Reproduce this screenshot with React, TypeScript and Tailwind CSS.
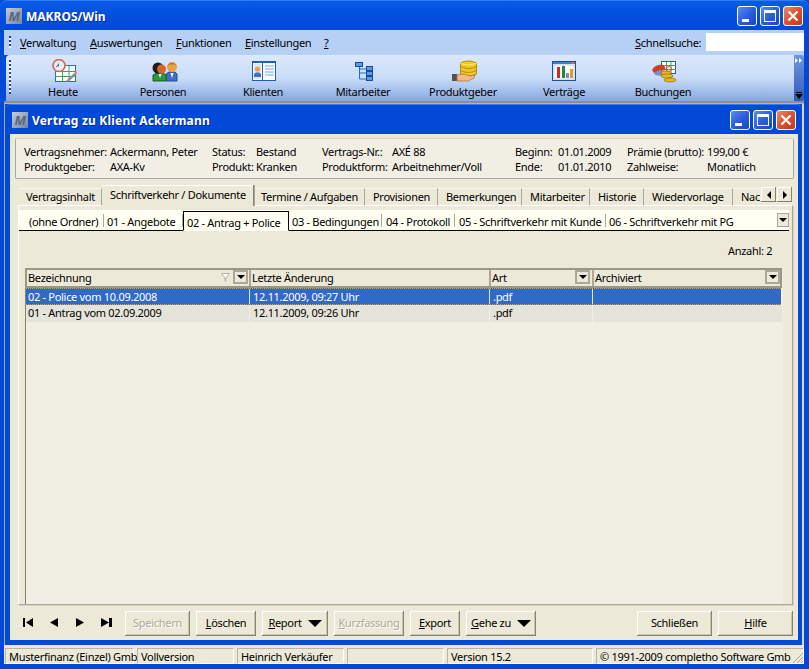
import type { ReactNode } from "react";

const FONT = "[font-family:'Liberation_Sans',Arial,sans-serif]";

function T({ className, children }: { className: string; children: ReactNode }) {
  return <div className={`absolute whitespace-nowrap leading-[13px] ${className}`}>{children}</div>;
}

function WinButtons({ className }: { className: string }) {
  const base =
    "w-[20px] h-[20px] rounded-[3px] border border-white relative flex items-center justify-center";
  return (
    <div className={`absolute flex gap-[3px] ${className}`}>
      <div className={`${base} bg-gradient-to-br from-[#5b8cf0] via-[#2a5fe0] to-[#1a45c0]`}>
        <div className="absolute left-[4px] bottom-[3px] w-[7px] h-[3px] bg-white" />
      </div>
      <div className={`${base} bg-gradient-to-br from-[#5b8cf0] via-[#2a5fe0] to-[#1a45c0]`}>
        <div className="w-[12px] h-[12px] border border-white border-t-[3px]" />
      </div>
      <div className={`${base} bg-gradient-to-br from-[#e8876a] via-[#d9532e] to-[#c03a18]`}>
        <svg width="12" height="12" viewBox="0 0 12 12">
          <path d="M1.5 1.5 L10.5 10.5 M10.5 1.5 L1.5 10.5" stroke="#fff" strokeWidth="2.2" />
        </svg>
      </div>
    </div>
  );
}

function AppIcon({ className }: { className: string }) {
  return (
    <div
      className={`absolute w-[16px] h-[16px] bg-gradient-to-br from-[#c3cddd] to-[#76859f] flex items-center justify-center ${className}`}
    >
      <span className="text-[13px] font-bold italic text-[#5a6680] leading-none">M</span>
    </div>
  );
}

function IconHeute() {
  return (
    <svg className="absolute left-[51px] top-[59px]" width="26" height="24" viewBox="0 0 26 24">
      <rect x="4.5" y="6.5" width="20" height="16" fill="#fff" stroke="#1d6fd0" />
      <path d="M4 12.5H24M4 17.5H24M11.5 7V22M18 7V22" stroke="#3aa850" strokeWidth="1" />
      <circle cx="8" cy="6.5" r="6" fill="#e8eef5" stroke="#e0604c" strokeWidth="1.6" />
      <path d="M8 7 L4.5 8.5 L8 4 Z" fill="#5a6a80" />
      <path d="M15 22 L23 14 L25 16 L17 23 Z" fill="#8a8f9c" />
      <path d="M23 14 L25 12 L26 14 L25 16 Z" fill="#d08a50" />
    </svg>
  );
}

function IconPersonen() {
  return (
    <svg className="absolute left-[152px] top-[61px]" width="26" height="21" viewBox="0 0 26 21">
      <path d="M14 20V13L17 11H23L25 13V20Z" fill="#3f6fc8" stroke="#274a8c" />
      <path d="M18.5 12L20 17L21.5 12Z" fill="#fff" />
      <circle cx="20" cy="6" r="5" fill="#f0a040" />
      <path d="M15 5 Q20 -2 25 5 L22 3.5 H18Z" fill="#b87820" />
      <path d="M1 20V14L5 12H11L14 14V20Z" fill="#2a9a3a" stroke="#146020" />
      <path d="M6.5 13L8 17L9.5 13Z" fill="#fff" />
      <circle cx="6" cy="7" r="5.5" fill="#1c1c1c" />
      <circle cx="9.5" cy="8" r="4.5" fill="#d8662c" />
    </svg>
  );
}

function IconKlienten() {
  return (
    <svg className="absolute left-[252px] top-[61px]" width="24" height="20" viewBox="0 0 24 20">
      <rect x="0.5" y="0.5" width="23" height="19" fill="#fff" stroke="#1c5fc0" />
      <rect x="0" y="0" width="24" height="2" fill="#1c5fc0" />
      <rect x="10" y="1" width="1" height="18" fill="#1c5fc0" />
      <rect x="2" y="3" width="7" height="15" fill="#dbe8fa" />
      <circle cx="5.5" cy="8" r="2.6" fill="#f0a040" />
      <path d="M2 16V13L4 11.5H7L9 13V16Z" fill="#3f6fc8" />
      <path d="M13 5H22M13 8H22M13 11H22M13 14H22" stroke="#6fa8e6" />
    </svg>
  );
}

function IconMitarbeiter() {
  return (
    <svg className="absolute left-[355px] top-[62px]" width="18" height="19" viewBox="0 0 18 19">
      <path d="M4.5 5V17H11M4.5 11H11M4.5 7H11" stroke="#1c6fd0" fill="none" />
      <rect x="0.5" y="0.5" width="7" height="4" fill="#5f9ae6" stroke="#174a9c" />
      <rect x="11.5" y="4.5" width="6" height="4" fill="#5f9ae6" stroke="#174a9c" />
      <rect x="11.5" y="9.5" width="6" height="4" fill="#5f9ae6" stroke="#174a9c" />
      <rect x="11.5" y="14.5" width="6" height="4" fill="#5f9ae6" stroke="#174a9c" />
    </svg>
  );
}

function IconProduktgeber() {
  return (
    <svg className="absolute left-[452px] top-[60px]" width="25" height="22" viewBox="0 0 25 22">
      <path d="M8.5 3 Q16.5 -1 24.5 3 V14 Q16.5 18 8.5 14 Z" fill="#f2c81e" stroke="#b88a10" />
      <path d="M8.5 6.5 Q16.5 10.5 24.5 6.5 M8.5 10.5 Q16.5 14.5 24.5 10.5" stroke="#b88a10" fill="none" />
      <path d="M8.5 3 Q16.5 7 24.5 3" stroke="#fff080" fill="none" />
      <rect x="0" y="14" width="5" height="7" fill="#55524c" />
      <path d="M5 15 L12 14 L18 16 L23 15 L22 18 L16 21 H5 Z" fill="#f2b98a" stroke="#b0683a" strokeWidth="0.7" />
    </svg>
  );
}

function IconVertraege() {
  return (
    <svg className="absolute left-[552px] top-[61px]" width="24" height="20" viewBox="0 0 24 20">
      <rect x="0.5" y="0.5" width="23" height="19" fill="#eef1f6" stroke="#1c4f9c" />
      <rect x="1" y="1" width="22" height="2" fill="#3f7fd8" />
      <rect x="19" y="1" width="3" height="2" fill="#d86a40" />
      <rect x="2" y="4" width="20" height="14" fill="#fff" stroke="#a0a8b4" strokeWidth="0.5" />
      <rect x="5" y="6" width="3" height="11" fill="#d02828" />
      <rect x="10" y="5" width="3" height="12" fill="#1e8a3a" />
      <rect x="14" y="12" width="3" height="5" fill="#7f8fb0" />
      <rect x="18" y="8" width="3" height="9" fill="#e8962c" />
    </svg>
  );
}

function IconBuchungen() {
  return (
    <svg className="absolute left-[652px] top-[61px]" width="26" height="22" viewBox="0 0 26 22">
      <rect x="9.5" y="0.5" width="14" height="12" fill="#fff" stroke="#1c5fc0" />
      <path d="M9 4.5H24M9 8.5H24M14.5 1V12M19 1V12" stroke="#3aa850" />
      <path d="M0 9 Q3 3 12 4 L14 9 L8 10 L2 12 Z" fill="#d83a28" />
      <path d="M2 12 L8 9 L12 11 L9 15 L3 14 Z" fill="#7f8fc8" />
      <circle cx="17" cy="8" r="2.5" fill="none" stroke="#e0503c" />
      <ellipse cx="14" cy="12" rx="5" ry="2" fill="#e8b820" stroke="#8a6a10" strokeWidth="0.7" />
      <ellipse cx="15" cy="15" rx="6" ry="2" fill="#e8b820" stroke="#8a6a10" strokeWidth="0.7" />
      <ellipse cx="18" cy="19" rx="6" ry="2" fill="#e8b820" stroke="#8a6a10" strokeWidth="0.7" />
    </svg>
  );
}

const TOP_TABS = [
  { label: "Vertragsinhalt", cls: "w-[84px]" },
  { label: "Schriftverkehr / Dokumente", cls: "w-[151px]", active: true },
  { label: "Termine / Aufgaben", cls: "w-[112px]" },
  { label: "Provisionen", cls: "w-[73px]" },
  { label: "Bemerkungen", cls: "w-[84px]" },
  { label: "Mitarbeiter", cls: "w-[68px]" },
  { label: "Historie", cls: "w-[54px]" },
  { label: "Wiedervorlage", cls: "w-[89px]" },
  { label: "Nac", cls: "w-[40px]" },
];

const SUB_TABS = [
  { label: "(ohne Ordner)", cls: "w-[85px] pl-[10px]" },
  { label: "01 - Angebote", cls: "w-[79px] pl-[3px]" },
  { label: "02 - Antrag + Police", cls: "w-[106px] pl-[3px]", active: true },
  { label: "03 - Bedingungen", cls: "w-[93px] pl-[3px]" },
  { label: "04 - Protokoll", cls: "w-[73px] pl-[4px]" },
  { label: "05 - Schriftverkehr mit Kunde", cls: "w-[151px] pl-[4px]" },
  { label: "06 - Schriftverkehr mit PG", cls: "w-[140px] pl-[3px]", last: true },
];

const RAISED = "shadow-[inset_-1px_-1px_0_#85836f,inset_1px_1px_0_#fff,inset_-2px_-2px_0_#c9c6b4]";
const HEADER_BTN =
  "absolute w-[15px] h-[14px] border-2 border-[#aca899] bg-[#ece9d8] flex items-center justify-center";

function Caret() {
  return <div className="w-0 h-0 border-x-[4px] border-x-transparent border-t-[4px] border-t-black" />;
}

function Btn({ className, disabled, children }: { className: string; disabled?: boolean; children: ReactNode }) {
  return (
    <div
      className={`absolute top-[611px] h-[25px] bg-[#ece9d8] flex items-center justify-center gap-[6px] ${RAISED} ${
        disabled ? "text-[#aca899] [text-shadow:1px_1px_0_#fff]" : "text-black"
      } ${className}`}
    >
      {children}
    </div>
  );
}

function DropCaret() {
  return <div className="w-0 h-0 border-x-[7px] border-x-transparent border-t-[7px] border-t-black" />;
}

export default function App() {
  return (
    <div className={`relative w-[809px] h-[669px] overflow-hidden bg-[#0349d8] text-[11px] tracking-[-0.3px] text-black ${FONT}`}>
      {/* outer frame */}
      <div className="absolute inset-x-0 top-0 h-[30px] rounded-t-[7px] bg-gradient-to-b from-[#0a5be8] via-[#0250dc] to-[#0349d8] border-t border-[#2f7cf5]" />
      <AppIcon className="left-[6px] top-[8px]" />
      <T className="left-[26px] top-[10px] text-[12px] tracking-normal font-bold text-white [text-shadow:1px_1px_0_#0a2a90]">MAKROS/Win</T>
      <WinButtons className="left-[737px] top-[6px]" />

      {/* menu */}
      <div className="absolute left-[4px] right-[5px] top-[30px] h-[25px] bg-[#b6cff5]" />
      <div className="absolute left-[9px] top-[36px] w-[2px] h-[12px] bg-[repeating-linear-gradient(to_bottom,#27408b_0,#27408b_2px,#ffffff_2px,#ffffff_4px)]" />
      <T className="left-[20px] top-[36px]"><u>V</u>erwaltung</T>
      <T className="left-[90px] top-[36px]"><u>A</u>uswertungen</T>
      <T className="left-[176px] top-[36px]"><u>F</u>unktionen</T>
      <T className="left-[245px] top-[36px]"><u>E</u>instellungen</T>
      <T className="left-[324px] top-[36px]"><u>?</u></T>
      <T className="left-[635px] top-[36px]"><u>S</u>chnellsuche:</T>
      <div className="absolute left-[706px] top-[33px] w-[98px] h-[18px] bg-white" />

      {/* toolbar */}
      <div className="absolute left-[6px] right-[5px] top-[55px] h-[46px] rounded-tl-[4px] bg-gradient-to-b from-[#dbe8fd] via-[#c9dcf8] to-[#86a8e0]" />
      <div className="absolute left-[9px] top-[60px] w-[2px] h-[34px] bg-[repeating-linear-gradient(to_bottom,#27408b_0,#27408b_2px,#ffffff_2px,#ffffff_4px)]" />
      <div className="absolute left-[794px] top-[55px] w-[10px] h-[46px] bg-gradient-to-b from-[#6f97e0] to-[#2f5bb5] rounded-r-[2px]" />
      <svg className="absolute left-[795px] top-[58px]" width="8" height="5" viewBox="0 0 8 5">
        <path d="M0 0L3 2.5L0 5ZM4 0L7 2.5L4 5Z" fill="#fff" />
      </svg>
      <div className="absolute left-[796px] top-[92px] w-[6px] h-px bg-black" />
      <div className="absolute left-[795px] top-[94px] w-0 h-0 border-x-[4px] border-x-transparent border-t-[5px] border-t-black" />
      <IconHeute />
      <IconPersonen />
      <IconKlienten />
      <IconMitarbeiter />
      <IconProduktgeber />
      <IconVertraege />
      <IconBuchungen />
      <T className="left-[13px] w-[100px] text-center top-[85px]">Heute</T>
      <T className="left-[113px] w-[100px] text-center top-[85px]">Personen</T>
      <T className="left-[213px] w-[100px] text-center top-[85px]">Klienten</T>
      <T className="left-[313px] w-[100px] text-center top-[85px]">Mitarbeiter</T>
      <T className="left-[413px] w-[100px] text-center top-[85px]">Produktgeber</T>
      <T className="left-[514px] w-[100px] text-center top-[85px]">Verträge</T>
      <T className="left-[613px] w-[100px] text-center top-[85px]">Buchungen</T>

      {/* separator between toolbar and child window */}
      <div className="absolute left-[4px] right-[5px] top-[101px] h-[3px] bg-[#8d8f8f] border-b border-[#c9b28a]" />
      <div className="absolute left-[4px] top-[104px] w-px h-[541px] bg-[#aca899]" />
      <div className="absolute left-[802px] top-[104px] w-[2px] h-[541px] bg-[#d8d6c8]" />

      {/* child window */}
      <div className="absolute left-[5px] top-[104px] w-[797px] h-[541px] rounded-t-[6px] bg-[#0349d8] border-t border-[#2f7cf5]" />
      <AppIcon className="left-[12px] top-[112px]" />
      <T className="left-[32px] top-[114px] text-[12px] tracking-[0.2px] font-bold text-white [text-shadow:1px_1px_0_#0a2a90]">Vertrag zu Klient Ackermann</T>
      <WinButtons className="left-[730px] top-[110px]" />

      <div className="absolute left-[10px] top-[134px] w-[788px] h-[506px] bg-[#ece9d8]" />

      {/* summary */}
      <div className="absolute left-[15px] top-[138px] w-[779px] h-[41px] bg-[#f1efe4] border border-[#aca899] rounded-[2px] border-t-[#d6d3c4]" />
      <T className="left-[24px] top-[145px]">Vertragsnehmer:</T>
      <T className="left-[110px] top-[145px]">Ackermann, Peter</T>
      <T className="left-[212px] top-[145px]">Status:</T>
      <T className="left-[256px] top-[145px]">Bestand</T>
      <T className="left-[322px] top-[145px]">Vertrags-Nr.:</T>
      <T className="left-[392px] top-[145px]">AXÉ 88</T>
      <T className="left-[515px] top-[145px]">Beginn:</T>
      <T className="left-[558px] top-[145px]">01.01.2009</T>
      <T className="left-[627px] top-[145px]">Prämie (brutto):</T>
      <T className="left-[707px] top-[145px]">199,00 €</T>
      <T className="left-[24px] top-[160px]">Produktgeber:</T>
      <T className="left-[110px] top-[160px]">AXA-Kv</T>
      <T className="left-[212px] top-[160px]">Produkt:</T>
      <T className="left-[256px] top-[160px]">Kranken</T>
      <T className="left-[322px] top-[160px]">Produktform:</T>
      <T className="left-[392px] top-[160px]">Arbeitnehmer/Voll</T>
      <T className="left-[515px] top-[160px]">Ende:</T>
      <T className="left-[558px] top-[160px]">01.01.2010</T>
      <T className="left-[627px] top-[160px]">Zahlweise:</T>
      <T className="left-[707px] top-[160px]">Monatlich</T>

      {/* main tab panel */}
      <div className="absolute left-[18px] top-[205px] w-[775px] h-[400px] border border-[#aca899] border-t-white border-l-white shadow-[1px_1px_0_#d6d3c4]" />
      <div className="absolute left-[18px] top-[185px] h-[21px] w-[742px] flex items-end overflow-hidden">
        {TOP_TABS.map((tab) => (
          <div
            key={tab.label}
            className={`${tab.cls} shrink-0 ${
              tab.active
                ? "h-[21px] pt-[2px] bg-[#ece9d8] border-t border-white z-10 shadow-[1px_0_0_#85836f,2px_0_0_#aca899]"
                : "h-[18px] pt-[1px] bg-[#ece9d8] border-t border-[#f8f7f0] border-r border-r-[#aca899] border-b border-b-white"
            } pl-[8px] overflow-hidden whitespace-nowrap leading-[13px]`}
          >
            {tab.label}
          </div>
        ))}
      </div>
      <div className="absolute left-[761px] top-[187px] w-[15px] h-[15px] bg-[#ece9d8] shadow-[inset_-1px_-1px_0_#85836f,inset_1px_1px_0_#fff] flex items-center justify-center">
        <div className="w-0 h-0 border-y-[4px] border-y-transparent border-r-[4px] border-r-black" />
      </div>
      <div className="absolute left-[777px] top-[187px] w-[15px] h-[15px] bg-[#ece9d8] shadow-[inset_-1px_-1px_0_#85836f,inset_1px_1px_0_#fff] flex items-center justify-center">
        <div className="w-0 h-0 border-y-[4px] border-y-transparent border-l-[4px] border-l-black" />
      </div>

      {/* folder tabs */}
      <div className="absolute left-[19px] top-[210px] w-[770px] h-[21px] bg-[#fffff2] border-b border-black" />
      <div className="absolute left-[19px] top-[211px] h-[20px] flex">
        {SUB_TABS.map((tab) => (
          <div
            key={tab.label}
            className={`${tab.cls} shrink-0 h-[20px] whitespace-nowrap leading-[21px] ${
              tab.active
                ? "border border-black border-b-[#fffff2] bg-[#fffff2] leading-[19px]"
                : tab.last
                  ? ""
                  : "relative after:absolute after:right-0 after:top-[3px] after:h-[13px] after:w-px after:bg-[#aca899]"
            }`}
          >
            {tab.label}
          </div>
        ))}
      </div>
      <div className="absolute left-[777px] top-[213px] w-[12px] h-[14px] bg-[#ece9d8] border border-[#aca899] flex items-center justify-center">
        <Caret />
      </div>

      <T className="left-[728px] top-[244px]">Anzahl: 2</T>

      {/* grid */}
      <div className="absolute left-[25px] top-[268px] w-[758px] h-[336px] bg-[#f1efe4] border-l border-[#85836f]" />
      <div className="absolute left-[25px] top-[268px] w-[757px] h-[20px] bg-[#ece9d8] border-2 border-[#9a9785] flex">
        <div className="w-[224px] h-full relative border-r-2 border-[#aca899] pl-[1px] leading-[16px]">
          Bezeichnung
          <svg className="absolute left-[194px] top-[3px]" width="9" height="9" viewBox="0 0 9 9">
            <path d="M0.5 0.5H8.5L5 5V8L4 8V5Z" fill="#fff" stroke="#b5b2a0" />
          </svg>
          <div className={`${HEADER_BTN} left-[206px] top-0`}><Caret /></div>
        </div>
        <div className="w-[240px] h-full border-r-2 border-[#aca899] pl-[1px] leading-[16px]">Letzte Änderung</div>
        <div className="w-[103px] h-full relative border-r-2 border-[#aca899] pl-[1px] leading-[16px]">
          Art
          <div className={`${HEADER_BTN} left-[84px] top-0`}><Caret /></div>
        </div>
        <div className="flex-1 h-full relative pl-[1px] leading-[16px]">
          Archiviert
          <div className={`${HEADER_BTN} left-[171px] top-0`}><Caret /></div>
        </div>
      </div>
      <div className="absolute left-[26px] top-[288px] w-[755px] h-[17px] bg-[#316ac5] text-white flex leading-[16px] border-y border-dotted border-[#e0a040]">
        <div className="w-[224px] pl-[2px] border-r border-[#dfe7f5]">02 - Police vom 10.09.2008</div>
        <div className="w-[240px] pl-[3px] border-r border-[#dfe7f5]">12.11.2009, 09:27 Uhr</div>
        <div className="w-[103px] pl-[3px] border-r border-[#dfe7f5]">.pdf</div>
        <div className="flex-1" />
      </div>
      <div className="absolute left-[26px] top-[305px] w-[756px] h-[17px] bg-[#e5e4da] flex leading-[16px]">
        <div className="w-[224px] pl-[2px] border-r border-[#f1efe4]">01 - Antrag vom 02.09.2009</div>
        <div className="w-[240px] pl-[3px] border-r border-[#f1efe4]">12.11.2009, 09:26 Uhr</div>
        <div className="w-[103px] pl-[3px] border-r border-[#f1efe4]">.pdf</div>
        <div className="flex-1" />
      </div>

      {/* record navigation */}
      <svg className="absolute left-[22px] top-[618px]" width="92" height="10" viewBox="0 0 92 10">
        <path d="M1 0H3V9H1ZM11 0V9L4 4.5Z" fill="#000" />
        <path d="M36 0V9L28 4.5Z" fill="#000" />
        <path d="M54 0V9L62 4.5Z" fill="#000" />
        <path d="M79 0V9L87 4.5ZM87 0H90V9H87Z" fill="#000" />
      </svg>

      <Btn disabled className="left-[125px] w-[65px]">Speichern</Btn>
      <Btn className="left-[196px] w-[60px]"><span><u>L</u>öschen</span></Btn>
      <Btn className="left-[262px] w-[66px]"><span><u>R</u>eport</span><DropCaret /></Btn>
      <Btn disabled className="left-[334px] w-[70px]"><span><u>K</u>urzfassung</span></Btn>
      <Btn className="left-[410px] w-[50px]"><span><u>E</u>xport</span></Btn>
      <Btn className="left-[466px] w-[70px]"><span><u>G</u>ehe zu</span><DropCaret /></Btn>
      <Btn className="left-[637px] w-[75px]">Schließen</Btn>
      <Btn className="left-[718px] w-[75px]"><span><u>H</u>ilfe</span></Btn>

      {/* status bar */}
      <div className="absolute left-[4px] right-[5px] top-[645px] h-[19px] bg-[#ece9d8] flex gap-[3px] pt-[3px] pl-px leading-[16px]">
        <div className="w-[129px] h-[16px] pl-[3px] border border-[#b8b5a4] border-r-white border-b-white whitespace-nowrap">Musterfinanz (Einzel) Gmb</div>
        <div className="w-[97px] h-[16px] pl-[3px] border border-[#b8b5a4] border-r-white border-b-white">Vollversion</div>
        <div className="w-[107px] h-[16px] pl-[3px] border border-[#b8b5a4] border-r-white border-b-white">Heinrich Verkäufer</div>
        <div className="w-[97px] h-[16px] border border-[#b8b5a4] border-r-white border-b-white" />
        <div className="w-[146px] h-[16px] pl-[3px] border border-[#b8b5a4] border-r-white border-b-white">Version 15.2</div>
        <div className="flex-1 h-[16px] pl-[3px] border border-[#b8b5a4] border-r-white border-b-white whitespace-nowrap">© 1991-2009 completho Software Gmb</div>
      </div>
      <svg className="absolute left-[792px] top-[652px]" width="12" height="12" viewBox="0 0 12 12">
        <path d="M11 1L1 11M11 5L5 11M11 9L9 11" stroke="#aca899" />
      </svg>
    </div>
  );
}
